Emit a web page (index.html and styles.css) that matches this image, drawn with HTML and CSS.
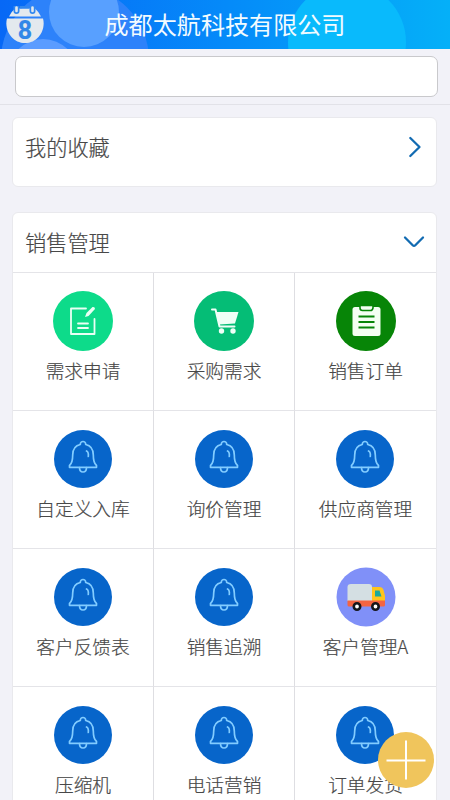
FILE: index.html
```html
<!DOCTYPE html>
<html lang="zh-CN">
<head>
<meta charset="utf-8">
<title>成都太航科技有限公司</title>
<link rel="stylesheet" href="styles.css">
</head>
<body>
<svg class="defs" width="0" height="0">
  <symbol id="bell" viewBox="0 0 58 58">
    <g fill="none" stroke="#82ccff" stroke-width="1.700" stroke-linejoin="round" stroke-linecap="round">
      <path d="M15.500 35.500C18.500 33 18.700 30 18.700 25C18.700 19 21.500 15.500 26.300 14.500C26 10.500 32 10.500 31.700 14.500C36.500 15.500 39.300 19 39.300 25C39.300 30 39.500 33 42.500 35.500V37.300H15.500Z"/>
      <path d="M25.500 37.500C25.500 43.500 32.500 43.500 32.500 37.500"/>
      <path d="M32.500 21Q34.800 22 34.300 26.500"/>
    </g>
  </symbol>
</svg>
<header class="topbar">
  <svg class="topbar-art" viewBox="0 0 450 49">
    <defs><linearGradient id="sky"><stop offset="0" stop-color="#0768f6"/><stop offset=".5" stop-color="#058af9"/><stop offset="1" stop-color="#05b0f8"/></linearGradient></defs>
    <rect width="450" height="49" fill="url(#sky)"/>
    <circle cx="75" cy="60" r="74" fill="#2d82fa"/>
    <circle cx="84" cy="12" r="35" fill="#58a0ff"/>
    <circle cx="43" cy="74" r="35" fill="#5b9cff"/>
    <circle cx="347" cy="42" r="59" fill="#09bafc"/>
  </svg>
  <div class="calendar">
    <svg viewBox="0 0 38 38">
      <path d="M3 10.500Q5.500 5.500 9 2.500H29Q32.500 5.500 35 10.500Z" fill="#e3e9ee"/>
      <path d="M1 12.500H37C40 24 32 37 19 37S-2 24 1 12.500Z" fill="#e3e9ee"/>
      <g stroke="#3187ef" stroke-width="6" stroke-linecap="round"><path d="M10.500 1V5M26.500 1V5"/></g>
      <g stroke="#e3e9ee" stroke-width="2.600" stroke-linecap="round"><path d="M10.500 1.500V5M26.500 1.500V5"/></g>
      <path d="M14 0H23V2.500H14Z" fill="#3187ef"/>
    </svg>
    <span class="calendar-day">8</span>
  </div>
  <h1 class="company">成都太航科技有限公司</h1>
</header>
<div class="search"><input class="search-input" type="text" aria-label="搜索"></div>
<main class="content">
  <section class="card favorites">
    <h2 class="card-title">我的收藏</h2>
    <svg class="chevron" viewBox="0 0 24 24"><path d="M9.300 3L18.500 12L9.300 21"/></svg>
  </section>
  <section class="card sales">
    <div class="card-head">
      <h2 class="card-title">销售管理</h2>
      <svg class="chevron" viewBox="0 0 24 24"><path d="M4 7.500L11.700 15.200Q13 16.500 14.300 15.200L22 7.500"/></svg>
    </div>
    <div class="grid">
      <div class="item"><svg class="icon" viewBox="0 0 60 60"><circle cx="30" cy="30" r="30" fill="#0ddb8a"/><g fill="none" stroke="#e9fff4" stroke-width="1.800" stroke-linecap="round" stroke-linejoin="round"><path d="M33 17.500H18V43H41.500V28"/><path d="M25 32.500H35M25 37H35"/></g><path d="M32 26L33.500 22L39.500 16Q42 15.500 42 18L35.500 25Z" fill="#e9fff4"/></svg><span>需求申请</span></div>
      <div class="item"><svg class="icon" viewBox="0 0 60 60"><circle cx="30" cy="30" r="30" fill="#05bd76"/><path d="M18 18.500H21.500L25.500 35.500H40.500" fill="none" stroke="#effff7" stroke-width="2" stroke-linecap="round" stroke-linejoin="round"/><path d="M22 21H44.500L41 32.500L25 33.500Z" fill="#effff7"/><circle cx="27.500" cy="40" r="2.700" fill="#effff7"/><circle cx="39" cy="40" r="2.700" fill="#effff7"/></svg><span>采购需求</span></div>
      <div class="item"><svg class="icon" viewBox="0 0 60 60"><circle cx="30" cy="30" r="30" fill="#078507"/><rect x="16.500" y="16" width="28" height="29" rx="2.500" fill="#f4fff2"/><path d="M24 14.500H37V17Q36.500 19.500 34.500 19.500H26.500Q24 19.500 24 17Z" fill="#f4fff2" stroke="#078507" stroke-width="1.600"/><path d="M22.500 25.500H38.500M22.500 31H38.500M22.500 36.500H38.500" stroke="#078507" stroke-width="2"/></svg><span>销售订单</span></div>
      <div class="item"><svg class="icon bell"><use href="#bell"/></svg><span>自定义入库</span></div>
      <div class="item"><svg class="icon bell"><use href="#bell"/></svg><span>询价管理</span></div>
      <div class="item"><svg class="icon bell"><use href="#bell"/></svg><span>供应商管理</span></div>
      <div class="item"><svg class="icon bell"><use href="#bell"/></svg><span>客户反馈表</span></div>
      <div class="item"><svg class="icon bell"><use href="#bell"/></svg><span>销售追溯</span></div>
      <div class="item"><svg class="icon" viewBox="0 0 60 60"><circle cx="30" cy="30" r="29.500" fill="#8090f8"/><path d="M11.500 34V20Q11.500 17 15 17H33Q36 17 36 20V34Z" fill="#d4dfe3"/><path d="M36 20H43.500Q46.500 20 47.500 23L49 29V35H36Z" fill="#ffc51c"/><path d="M39 23.500H43.500L45.500 29.500H39Z" fill="#19a99c"/><path d="M11.500 33.500H49V38Q49 39.500 47.500 39.500H13Q11.500 39.500 11.500 38Z" fill="#f46442"/><g fill="#fff" stroke="#15151b" stroke-width="2.600"><circle cx="21" cy="39.500" r="3.200"/><circle cx="39.500" cy="39.500" r="3.200"/></g></svg><span>客户管理A</span></div>
      <div class="item"><svg class="icon bell"><use href="#bell"/></svg><span>压缩机</span></div>
      <div class="item"><svg class="icon bell"><use href="#bell"/></svg><span>电话营销</span></div>
      <div class="item"><svg class="icon bell"><use href="#bell"/></svg><span>订单发货</span></div>
    </div>
  </section>
</main>
<button class="fab" aria-label="添加"><svg viewBox="0 0 56 56"><path d="M28 8.500V47.500M8.500 28.500H47.500" stroke="#fff" stroke-width="2"/></svg></button>
</body>
</html>
```
FILE: styles.css
```css
* { box-sizing: border-box; }
body {
  margin: 0;
  height: 800px;
  overflow: hidden;
  background: #f2f2f8;
  color: #484848;
  font-family: "Noto Sans CJK SC", sans-serif;
  font-weight: 300;
  -webkit-text-stroke: 0.2px currentColor;
}
.defs { position: absolute; }
.topbar {
  position: relative;
  height: 49px;
  overflow: hidden;
}
.topbar-art { position: absolute; inset: 0; width: 450px; height: 49px; }
.calendar { position: absolute; left: 6px; top: 6px; width: 38px; height: 38px; }
.calendar svg { display: block; width: 38px; height: 38px; }
.calendar-day {
  position: absolute;
  inset: 12px 0 0;
  color: #3187e8;
  font: 700 25px/25px Roboto, sans-serif;
  text-align: center;
}
.company {
  position: relative;
  margin: 0;
  color: #f2fbff;
  font-size: 24.1px;
  line-height: 48px;
  font-weight: 400;
  text-align: center;
  -webkit-text-stroke: 0;
}
.search {
  height: 56px;
  padding: 7px 12px 0 15px;
  border-bottom: 1px solid #e2e2e8;
}
.search-input {
  display: block;
  width: 100%;
  height: 41px;
  border: 1px solid #c9c9cc;
  border-radius: 7px;
  background: #fff;
}
.content { padding: 12px 13px 0 12px; }
.card {
  background: #fff;
  border: 1px solid #e9e9ed;
  border-radius: 6px;
}
.favorites {
  display: flex;
  justify-content: space-between;
  height: 70px;
  padding: 13px 11px 0 12px;
  margin-bottom: 25px;
}
.card-head {
  display: flex;
  justify-content: space-between;
  height: 60px;
  padding: 13px 11px 0 12px;
  border-bottom: 1px solid #e4e4e8;
}
.card-title { margin: 0; font-size: 21.2px; line-height: 32px; font-weight: 300; }
.chevron {
  width: 24px;
  height: 24px;
  margin-top: 4px;
  fill: none;
  stroke: #126bb2;
  stroke-width: 2.3;
  stroke-linecap: round;
  stroke-linejoin: round;
}
.grid {
  display: grid;
  grid-template-columns: 141px 141px 141px;
  grid-auto-rows: 138px;
}
.item {
  display: flex;
  flex-direction: column;
  align-items: center;
  padding-top: 18px;
  border-right: 1px solid #dedee2;
  border-bottom: 1px solid #e4e4e8;
  font-size: 18.7px;
  line-height: 28px;
  white-space: nowrap;
}
.item:nth-child(3n) { border-right: 0; }
.icon { flex: none; width: 60px; height: 60px; margin-bottom: 5px; }
.bell {
  width: 58px;
  height: 58px;
  margin: 1px 1px 6px 0;
  border-radius: 50%;
  background: #0765ca;
}
.fab {
  position: absolute;
  left: 378px;
  top: 732px;
  width: 56px;
  height: 56px;
  padding: 0;
  border: 0;
  border-radius: 50%;
  background: #f0c55c;
}
.fab svg { display: block; width: 56px; height: 56px; }
```
